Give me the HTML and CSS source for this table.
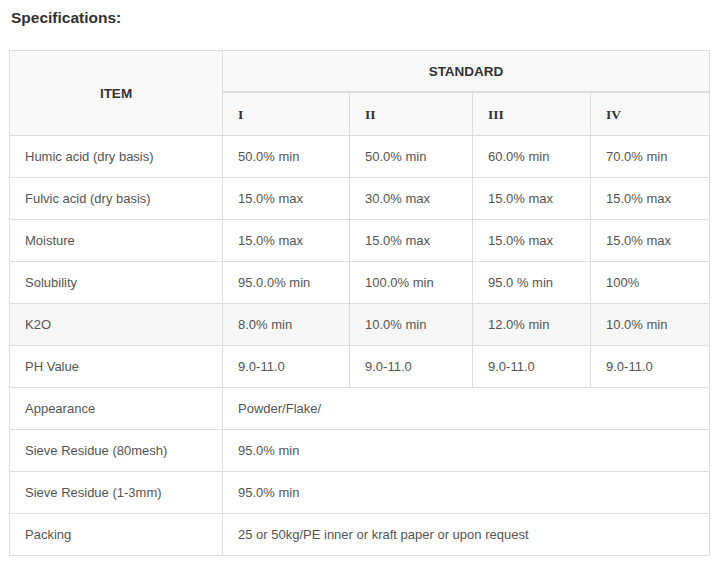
FILE: index.html
```html
<!DOCTYPE html>
<html>
<head>
<meta charset="utf-8">
<link rel="stylesheet" href="styles.css">
</head>
<body>
<div class="page">
  <h3 class="title">Specifications:</h3>
  <table class="spec">
    <colgroup>
      <col class="c-item"><col class="c1"><col class="c2"><col class="c3"><col class="c4">
    </colgroup>
    <thead>
      <tr>
        <th rowspan="2" class="center">ITEM</th>
        <th colspan="4" class="center std">STANDARD</th>
      </tr>
      <tr class="roman">
        <th>I</th><th>II</th><th>III</th><th>IV</th>
      </tr>
    </thead>
    <tbody>
      <tr><td>Humic acid (dry basis)</td><td>50.0% min</td><td>50.0% min</td><td>60.0% min</td><td>70.0% min</td></tr>
      <tr><td>Fulvic acid (dry basis)</td><td>15.0% max</td><td>30.0% max</td><td>15.0% max</td><td>15.0% max</td></tr>
      <tr><td>Moisture</td><td>15.0% max</td><td>15.0% max</td><td>15.0% max</td><td>15.0% max</td></tr>
      <tr><td>Solubility</td><td>95.0.0% min</td><td>100.0% min</td><td>95.0 % min</td><td>100%</td></tr>
      <tr class="hover"><td>K2O</td><td>8.0% min</td><td>10.0% min</td><td>12.0% min</td><td>10.0% min</td></tr>
      <tr><td>PH Value</td><td>9.0-11.0</td><td>9.0-11.0</td><td>9.0-11.0</td><td>9.0-11.0</td></tr>
      <tr><td>Appearance</td><td colspan="4">Powder/Flake/</td></tr>
      <tr><td>Sieve Residue (80mesh)</td><td colspan="4">95.0% min</td></tr>
      <tr><td>Sieve Residue (1-3mm)</td><td colspan="4">95.0% min</td></tr>
      <tr><td>Packing</td><td colspan="4">25 or 50kg/PE inner or kraft paper or upon request</td></tr>
    </tbody>
  </table>
</div>
</body>
</html>
```
FILE: styles.css
```css
html, body {
  margin: 0;
  padding: 0;
  background: #ffffff;
}
.page {
  padding: 8px 0 0 9px;
  font-family: "Liberation Sans", Arial, sans-serif;
}
.title {
  margin: 0 0 22px 2px;
  font-size: 15.5px;
  line-height: 20px;
  font-weight: bold;
  color: #333333;
}
.spec {
  border-collapse: collapse;
  table-layout: fixed;
  width: 700px;
  border: 1px solid #dddddd;
}
.c-item { width: 213px; }
.c1 { width: 127px; }
.c2 { width: 123px; }
.c3 { width: 118px; }
.c4 { width: 119px; }
.spec th, .spec td {
  border: 1px solid #dddddd;
  padding: 10px 15px;
  line-height: 21px;
  text-align: left;
  vertical-align: middle;
}
.spec td {
  font-size: 13px;
  color: #555555;
}
.spec thead th {
  background: #f9f9f9;
  color: #333333;
  font-size: 13.5px;
  font-weight: bold;
}
.spec thead th.center {
  text-align: center;
}
.spec thead th.std {
  border-bottom: 2px solid #dddddd;
  padding-bottom: 9px;
}
.roman th {
  font-family: "Liberation Serif", "Times New Roman", serif;
  font-size: 16px;
  color: #222222;
  padding-top: 11px;
}
.spec tr.hover td {
  background: #f7f7f7;
}
```
